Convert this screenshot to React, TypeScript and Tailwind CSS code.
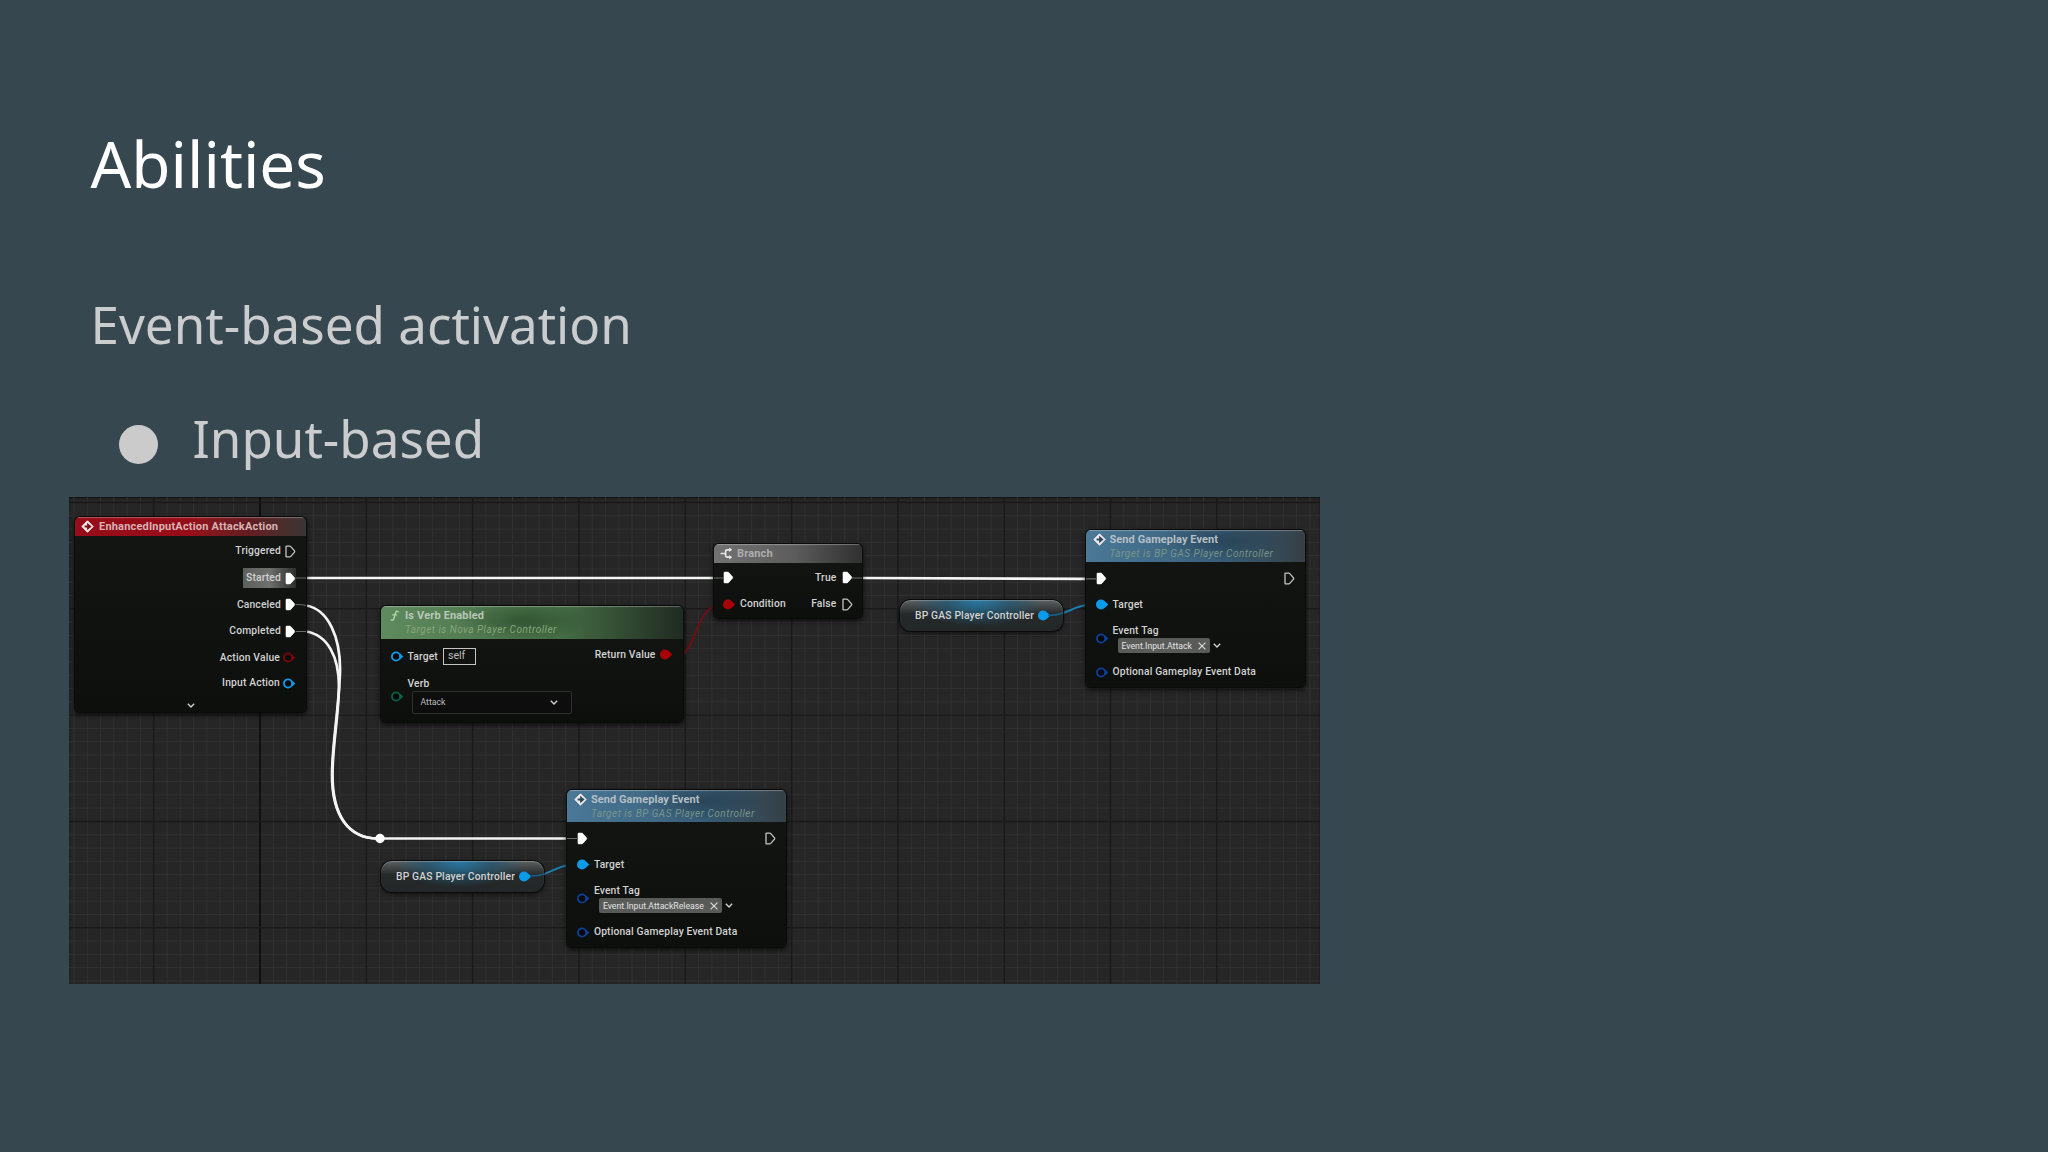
import { ReactNode } from "react";
import clsx from "clsx";

type PinColor = "red" | "darkRed" | "blue" | "navy" | "green";

const pinColors: Record<PinColor, string> = {
  red: "#a80208",
  darkRed: "#7f0309",
  blue: "#0c9bea",
  navy: "#0b3f98",
  green: "#0b5f47",
};

const GRID = 13.29;

function ExecPin({ filled = false }: { filled?: boolean }) {
  return (
    <svg width="11" height="13" viewBox="0 0 11 13" className="shrink-0">
      <path
        d="M1.6 1.1h3.2q.6 0 1 .5l3.7 4.2q.5.7 0 1.4l-3.7 4.2q-.4.5-1 .5H1.6q-.6 0-.6-.6V1.7q0-.6.6-.6z"
        fill={filled ? "#ffffff" : "none"}
        stroke={filled ? "#ffffff" : "#c4c4c4"}
        strokeWidth={filled ? 0.6 : 1.3}
      />
    </svg>
  );
}

function DataPin({ color, filled = false }: { color: PinColor; filled?: boolean }) {
  const c = pinColors[color];
  return (
    <svg width="13" height="11" viewBox="0 0 13 11" className="shrink-0">
      <path d="M8.8 2.3 12.4 5.5 8.8 8.7z" fill={c} />
      <circle cx="5" cy="5.5" r="4.1" fill={filled ? c : "#06080a"} stroke={c} strokeWidth="1.8" />
    </svg>
  );
}

function EventIcon({ fill }: { fill: string }) {
  return (
    <svg width="13" height="13" viewBox="0 0 13 13" className="shrink-0">
      <path d="M6.5.8 12.2 6.5 6.5 12.2.8 6.5z" fill="#f1e9e9" stroke="#f1e9e9" strokeLinejoin="round" />
      <path d="M3.6 5.4h2.5V2.7L10.6 6.5 6.1 10.3V7.6H3.6z" fill={fill} />
    </svg>
  );
}

function BranchIcon() {
  return (
    <svg width="13" height="13" viewBox="0 0 13 13" fill="none" stroke="#e8e8e8" strokeWidth="1.7" className="shrink-0">
      <path d="M.6 6.5h4.2M10 2.8H7.2q-1.6 0-1.6 1.6v4.2q0 1.6 1.6 1.6H10" />
      <path d="M9.2.6 12.2 2.8 9.2 5zM9.2 8 12.2 10.2 9.2 12.4z" fill="#e8e8e8" stroke="none" />
    </svg>
  );
}

function FunctionIcon() {
  return (
    <svg width="11" height="13" viewBox="0 0 11 13" fill="none" stroke="#a6d9a0" strokeLinecap="round" className="shrink-0">
      <path d="M9.2 2.6Q7.2 1.4 6.5 4L5 9.4Q4.3 11.8 2.2 10.9" strokeWidth="1.5" />
      <path d="M3.6 5.8h4.2" strokeWidth="1.2" />
    </svg>
  );
}

function Chevron() {
  return (
    <svg width="8" height="5" viewBox="0 0 8 5" fill="none" stroke="#d0d0d0" strokeWidth="1.4" className="shrink-0">
      <path d="M.8.8 4 4 7.2.8" />
    </svg>
  );
}

function Label({ children }: { children: ReactNode }) {
  return (
    <span className="whitespace-nowrap text-[10.3px] font-medium leading-[12px] tracking-[0.16px] text-[#d2d2d2]">
      {children}
    </span>
  );
}

interface NodeProps {
  className: string;
  headerClassName: string;
  icon: ReactNode;
  title: string;
  subtitle?: string;
  titleClassName?: string;
  subtitleClassName?: string;
  children: ReactNode;
}

function Node({ className, headerClassName, icon, title, subtitle, titleClassName, subtitleClassName, children }: NodeProps) {
  return (
    <div
      className={clsx(
        "absolute flex flex-col overflow-hidden rounded-[5px] bg-linear-to-b from-[#131613] to-[#0d0f0d] shadow-[0_0_0_1px_#0a0a0a,0_2px_5px_1px_rgba(0,0,0,0.65)]",
        className,
      )}
    >
      <div className={clsx("flex shrink-0 items-start shadow-[inset_0_1px_1px_rgba(255,255,255,0.3)]", headerClassName)}>
        {icon}
        <div className="flex flex-col">
          <span className={clsx("whitespace-nowrap text-[11px] font-bold leading-[14px]", titleClassName ?? "tracking-[0.07px] text-[#b5bec5]")}>
            {title}
          </span>
          {subtitle && (
            <span className={clsx("whitespace-nowrap text-[10px] italic leading-[14px] tracking-[0.5px]", subtitleClassName)}>
              {subtitle}
            </span>
          )}
        </div>
      </div>
      {children}
    </div>
  );
}

function InputActionNode() {
  const execs = [
    { label: "Triggered", filled: false },
    { label: "Started", filled: true },
    { label: "Canceled", filled: true },
    { label: "Completed", filled: true },
  ];
  return (
    <Node
      className="left-[6px] top-[20.5px] h-[195px] w-[231px]"
      headerClassName="h-[19px] gap-[5px] bg-linear-to-r from-[#960d19] from-50% via-[#631c22] via-75% to-[#383534] pl-[6px] pt-[3px]"
      icon={<EventIcon fill="#7d0e17" />}
      title="EnhancedInputAction AttackAction"
      titleClassName="tracking-[0.19px] text-[#d6b3b3]"
    >
      <div className="flex flex-col items-end pr-[10px] pt-[2px]">
        {execs.map(({ label, filled }) => (
          <div key={label} className="flex h-[26.7px] items-center">
            <div
              className={clsx(
                "flex h-[20px] items-center gap-[4px] pl-[3px]",
                label === "Started" && "bg-linear-to-r from-[#5d5f5d] via-[#6e706e] to-[#2c2e2c]",
              )}
            >
              <Label>{label}</Label>
              <ExecPin filled={filled} />
            </div>
          </div>
        ))}
        <div className="flex h-[26px] items-center gap-[3px]">
          <Label>Action Value</Label>
          <DataPin color="darkRed" />
        </div>
        <div className="flex h-[25px] items-center gap-[3px]">
          <Label>Input Action</Label>
          <DataPin color="blue" />
        </div>
      </div>
      <div className="flex justify-center pt-[7px]">
        <Chevron />
      </div>
    </Node>
  );
}

function IsVerbEnabledNode() {
  return (
    <Node
      className="left-[312px] top-[109.5px] h-[115.5px] w-[302px]"
      headerClassName="h-[33px] gap-[5px] bg-[radial-gradient(ellipse_22%_60%_at_47%_45%,rgba(20,50,20,0.45),transparent_100%),linear-gradient(to_right,#5f8a5f,#456c45_60%,#202a21)] pl-[8px] pt-[3px]"
      icon={<FunctionIcon />}
      title="Is Verb Enabled"
      titleClassName="tracking-[0.15px] text-[#b8c7b6]"
      subtitle="Target is Nova Player Controller"
      subtitleClassName="text-[#86a67a]"
    >
      <div className="flex justify-between pl-[9.5px] pr-[10.5px]">
        <div className="flex flex-col">
          <div className="flex h-[35px] items-center gap-[4px]">
            <DataPin color="blue" />
            <Label>Target</Label>
            <span className="ml-[1px] h-[17px] w-[33px] border border-[#c4c4c4] pl-[4px] text-[10.6px] leading-[14px] text-[#bdbdbd]">
              self
            </span>
          </div>
          <div className="flex h-[44px] items-center gap-[4px]">
            <DataPin color="green" />
            <div className="flex flex-col gap-[1px]">
              <Label>Verb</Label>
              <div className="ml-[4px] flex h-[23px] w-[160px] items-center justify-between rounded-[2px] border border-[#2e302e] bg-[#0c0d0c] pl-[8px] pr-[13px]">
                <span className="text-[8.7px] text-[#bdbdbd]">Attack</span>
                <Chevron />
              </div>
            </div>
          </div>
        </div>
        <div className="flex h-[31px] items-center gap-[4px]">
          <Label>Return Value</Label>
          <DataPin color="red" filled />
        </div>
      </div>
    </Node>
  );
}

function BranchNode() {
  return (
    <Node
      className="left-[645px] top-[47.5px] h-[74px] w-[147.5px]"
      headerClassName="h-[19px] gap-[4px] bg-linear-to-r from-[#727272] via-[#5c5c5c] via-55% to-[#303030] pl-[6px] pt-[2.5px]"
      icon={<BranchIcon />}
      title="Branch"
      titleClassName="tracking-[0.15px] text-[#adadad]"
    >
      <div className="flex justify-between pl-[9px] pr-[9px] pt-[1.5px]">
        <div className="flex flex-col">
          <div className="flex h-[26.5px] items-center">
            <ExecPin filled />
          </div>
          <div className="flex h-[26px] items-center gap-[4px]">
            <DataPin color="red" filled />
            <Label>Condition</Label>
          </div>
        </div>
        <div className="flex flex-col items-end">
          <div className="flex h-[26.5px] items-center gap-[5px]">
            <Label>True</Label>
            <ExecPin filled />
          </div>
          <div className="flex h-[26px] items-center gap-[5px]">
            <Label>False</Label>
            <ExecPin />
          </div>
        </div>
      </div>
    </Node>
  );
}

function SendGameplayEventNode({ className, tag }: { className: string; tag: string }) {
  return (
    <Node
      className={clsx("h-[157px] w-[219px]", className)}
      headerClassName="h-[32.5px] gap-[4px] bg-[radial-gradient(ellipse_30%_70%_at_62%_35%,rgba(15,30,42,0.4),transparent_100%),linear-gradient(to_right,#4a7896,#3a617c_60%,#353f45)] pl-[6.5px] pt-[3px]"
      icon={<EventIcon fill="#2b4a5f" />}
      title="Send Gameplay Event"
      subtitle="Target is BP GAS Player Controller"
      subtitleClassName="text-[#76958a]"
    >
      <div className="flex flex-col pl-[9.5px] pr-[10px] pt-[3px]">
        <div className="flex h-[26px] items-center justify-between">
          <ExecPin filled />
          <ExecPin />
        </div>
        <div className="flex h-[27px] items-center gap-[4px]">
          <DataPin color="blue" filled />
          <Label>Target</Label>
        </div>
        <div className="flex h-[40px] items-center gap-[4px]">
          <DataPin color="navy" />
          <div className="flex h-[28px] flex-col gap-[1.5px] pt-[0.5px]">
            <Label>Event Tag</Label>
            <div className="ml-[5px] flex items-center gap-[3px]">
              <div className="flex h-[14.5px] items-center gap-[6px] rounded-[2px] bg-[#595b59] pl-[4px] pr-[4px]">
                <span className="whitespace-nowrap text-[8.7px] leading-[14px] text-[#e2e2e2]">{tag}</span>
                <svg width="8" height="8" viewBox="0 0 8 8" stroke="#d6d6d6" strokeWidth="1.2">
                  <path d="M.6.6l6.8 6.8M7.4.6.6 7.4" />
                </svg>
              </div>
              <Chevron />
            </div>
          </div>
        </div>
        <div className="flex h-[28px] items-center gap-[4px]">
          <DataPin color="navy" />
          <Label>Optional Gameplay Event Data</Label>
        </div>
      </div>
    </Node>
  );
}

function VariableNode({ className }: { className: string }) {
  return (
    <div
      className={clsx(
        "absolute flex h-[31px] w-[163px] items-center gap-[4px] rounded-[11px] bg-[#1f2324] bg-[radial-gradient(ellipse_40%_80%_at_48%_5%,#28759f_0%,rgba(34,88,116,0.7)_50%,transparent_100%),linear-gradient(to_bottom,#5b6062,#26292a_45%,#232727)] pl-[15px] shadow-[0_0_0_1px_#0b0b0b,inset_0_1px_1px_rgba(255,255,255,0.25),0_2px_5px_rgba(0,0,0,0.6)]",
        className,
      )}
    >
      <Label>BP GAS Player Controller</Label>
      <DataPin color="blue" filled />
    </div>
  );
}

function GridAndWires() {
  const cols = Array.from({ length: 94 }, (_, i) => i - 14);
  const rows = Array.from({ length: 37 }, (_, i) => i);
  return (
    <svg width="1251" height="487" className="absolute inset-0" fill="none">
      {cols.filter((c) => c % 8 !== 0).map((c) => (
        <path key={c} d={`M${191 + c * GRID} 0V487`} stroke="#313131" />
      ))}
      {rows.filter((r) => r % 8 !== 0).map((r) => (
        <path key={r} d={`M0 ${5.5 + r * GRID}H1251`} stroke="#313131" />
      ))}
      {cols.filter((c) => c % 8 === 0).map((c) => (
        <path key={c} d={`M${191 + c * GRID} 0V487`} stroke={c === 0 ? "#080808" : "#1a1a1a"} strokeWidth="1.4" />
      ))}
      {rows.filter((r) => r % 8 === 0).map((r) => (
        <path key={r} d={`M0 ${5.5 + r * GRID}H1251`} stroke="#1a1a1a" strokeWidth="1.4" />
      ))}

      <g stroke="#f4f4f4" strokeWidth="2.7">
        <path d="M236 81H645M792 81L1017 81.8" />
        <path d="M237 108.5C259 112 272 140 271 176C269.5 215 263 248 263 278C263 318 279 341.5 309 341.5" />
        <path d="M237 134.5C259 138 270 160 270 190C269 225 263.5 248 263.5 278C263.5 318 279 341.5 309 341.5" />
        <path d="M309 341.5H498" />
      </g>
      <circle cx="311" cy="341.5" r="4.7" fill="#ffffff" />
      <path d="M614 156.5C625 151 629 115 645 109.5" stroke="#6d0f17" strokeWidth="2" />
      <g stroke="#1a7fae" strokeWidth="2">
        <path d="M977 118.5C999 118.5 1001 110 1018 108" />
        <path d="M459 379C481 379 483 371 499 368" />
      </g>
    </svg>
  );
}

// Wire ends that stay faintly visible on top of the node bodies.
function WireEnds() {
  return (
    <svg width="1251" height="487" className="pointer-events-none absolute inset-0" fill="none">
      <path d="M227 81h10M227 107.5q6 0 10 1M227 134.5h10M645 81h10M783 81h10M1017 81.8h10M498 341.5h10" stroke="#6b6b6b" strokeWidth="1.2" />
      <path d="M979 118.5q8 0 15-2.5M461 379q8 0 15-2" stroke="#16608a" strokeWidth="1.4" />
    </svg>
  );
}

function Blueprint() {
  return (
    <div className="relative h-[487px] w-[1251px] overflow-hidden bg-[#262626] font-[Roboto,sans-serif] shadow-[inset_0_1px_2px_rgba(0,0,0,0.6)]">
      <GridAndWires />
      <InputActionNode />
      <IsVerbEnabledNode />
      <BranchNode />
      <VariableNode className="left-[831px] top-[103.5px]" />
      <SendGameplayEventNode className="left-[1017px] top-[33.4px]" tag="Event.Input.Attack" />
      <VariableNode className="left-[312px] top-[364.5px]" />
      <SendGameplayEventNode className="left-[498.4px] top-[293.4px]" tag="Event.Input.AttackRelease" />
      <WireEnds />
    </div>
  );
}

export default function App() {
  return (
    <div className="h-[1152px] w-[2048px] overflow-hidden bg-[#37474f] pl-[69px] pt-[131.5px] font-['Noto_Sans',sans-serif]">
      <h1 className="pl-[21.5px] text-[63.8px] leading-[64px] text-white">Abilities</h1>
      <p className="pl-[21.5px] pt-[96px] text-[51.1px] leading-[64px] text-[#cacccd]">Event-based activation</p>
      <div className="flex items-center pl-[49.5px] pt-[50px] text-[51.1px] leading-[64px] text-[#cacccd]">
        <span className="mt-[13px] size-[39px] rounded-full bg-[#cbcbcb]" />
        <span className="pl-[35px]">Input-based</span>
      </div>
      <div className="pt-[27px]">
        <Blueprint />
      </div>
    </div>
  );
}
